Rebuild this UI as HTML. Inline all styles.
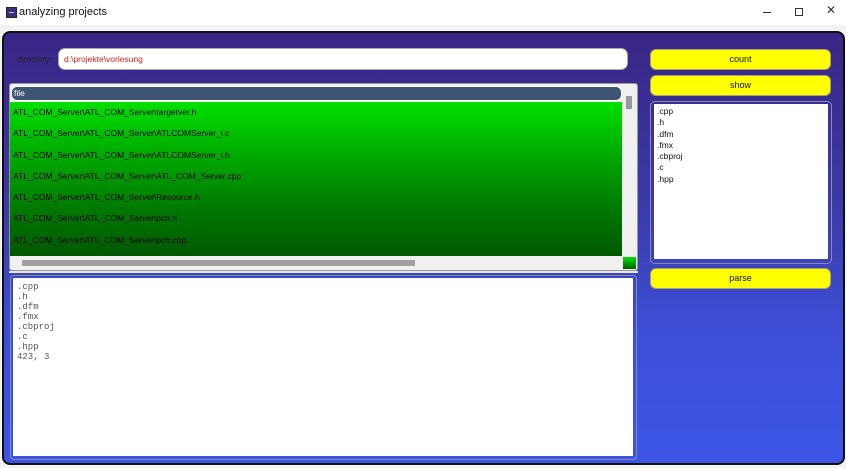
<!DOCTYPE html>
<html><head><meta charset="utf-8"><style>
*{margin:0;padding:0;box-sizing:border-box}
body{width:846px;height:468px;overflow:hidden;background:#f3f3f3;font-family:"Liberation Sans",sans-serif;position:relative}
.title{position:absolute;left:0;top:0;width:846px;height:25px;background:#fff;font-size:11px}
.main{position:absolute;left:2px;top:31px;width:843px;height:434px;border:2px solid #111;border-radius:8px;overflow:hidden;
background:linear-gradient(180deg,#3a2585 0%,#3b3aa8 40%,#3d4fd8 70%,#3c55e6 100%)}
.abs{position:absolute}
.btn{position:absolute;left:650px;width:181px;height:21px;background:#ffff00;border:1px solid #a8a070;border-radius:6px;font-size:9px;text-align:center;line-height:19px;color:#111}
.row{height:21.3px;line-height:21px;font-size:8.5px;padding-left:3px;color:#000}
.mono{font-family:"Liberation Mono",monospace;font-size:9px;color:#555;line-height:10px}
</style></head><body>
<div class="title">
 <div class="abs" style="left:6px;top:7px;width:11px;height:11px;background:#3a2f80;border:1px solid #222"><div style="margin:4px 2px 0;height:1px;background:#ccc"></div></div>
 <div class="abs" style="left:19px;top:6px;color:#111">analyzing projects</div>
 <div class="abs" style="left:763px;top:12px;width:8px;height:1px;background:#333"></div>
 <div class="abs" style="left:795px;top:8px;width:8px;height:8px;border:1px solid #333"></div>
 <div class="abs" style="left:826px;top:3px;font-size:12px;color:#333">✕</div>
</div>
<div class="main"></div>
<div class="abs" style="left:17px;top:54px;font-size:8.5px;color:#222">directory:</div>
<div class="abs" style="left:58px;top:48px;width:570px;height:22px;background:#fff;border:1px solid #aaa;border-radius:7px;font-size:8.5px;color:#e02020;padding:5px 0 0 5px">d:\projekte\vorlesung</div>

<div class="abs" style="left:9px;top:83px;width:629px;height:188px;background:#f0f0f0;border:1px solid #999;border-radius:3px"></div>
<div class="abs" style="left:11px;top:86px;width:611px;height:15px;background:#3f5573;border:1px solid #fff;border-radius:6px;color:#fff;font-size:8.5px;padding-left:2px;line-height:13px">file</div>
<div class="abs" style="left:10px;top:102px;width:612px;height:154px;background:linear-gradient(180deg,#00e000 0%,#00b000 30%,#007800 70%,#005800 100%)">
 <div class="row">ATL_COM_Server\ATL_COM_Server\targetver.h</div>
 <div class="row">ATL_COM_Server\ATL_COM_Server\ATLCOMServer_i.c</div>
 <div class="row">ATL_COM_Server\ATL_COM_Server\ATLCOMServer_i.h</div>
 <div class="row">ATL_COM_Server\ATL_COM_Server\ATL_COM_Server.cpp</div>
 <div class="row">ATL_COM_Server\ATL_COM_Server\Resource.h</div>
 <div class="row">ATL_COM_Server\ATL_COM_Server\pch.h</div>
 <div class="row">ATL_COM_Server\ATL_COM_Server\pch.cpp</div>
</div>
<div class="abs" style="left:626px;top:96px;width:6px;height:13px;background:#999"></div>
<div class="abs" style="left:22px;top:260px;width:393px;height:6px;background:#a0a0a0"></div>
<div class="abs" style="left:623px;top:257px;width:13px;height:12px;background:linear-gradient(#00e000,#006000)"></div>
<div class="abs" style="left:9px;top:271px;width:629px;height:2px;background:#e8e8e8"></div>

<div class="abs" style="left:10px;top:275px;width:627px;height:185px;border:1px solid #8a8aaa;border-radius:4px"></div>
<div class="abs mono" style="left:13px;top:278px;width:620px;height:178px;background:#fff;padding:4px 0 0 4px">.cpp<br>.h<br>.dfm<br>.fmx<br>.cbproj<br>.c<br>.hpp<br>423, 3</div>

<div class="btn" style="top:49px">count</div>
<div class="btn" style="top:75px">show</div>
<div class="abs" style="left:650px;top:101px;width:182px;height:163px;border:1px solid #8a8aaa;border-radius:5px"></div>
<div class="abs" style="left:654px;top:104px;width:174px;height:155px;background:#fff;font-size:8.5px;line-height:11.3px;padding:2px 0 0 3px;color:#111">.cpp<br>.h<br>.dfm<br>.fmx<br>.cbproj<br>.c<br>.hpp</div>
<div class="btn" style="top:268px">parse</div>
</body></html>
